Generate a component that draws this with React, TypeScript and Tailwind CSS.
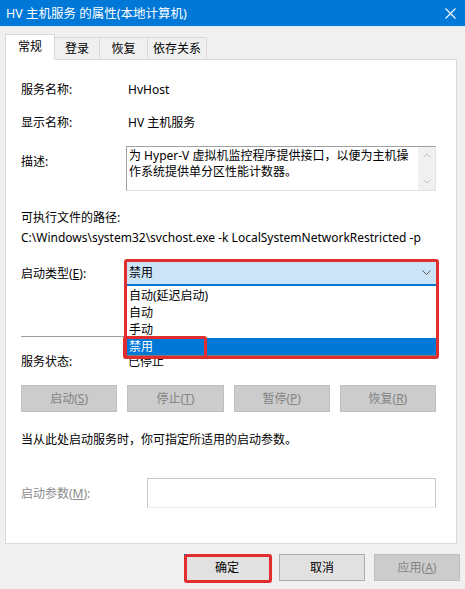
import React from 'react';

// Windows 10 service properties dialog (常规 tab with open start-type dropdown)

const font = { fontFamily: '"Noto Sans", "Noto Sans CJK SC", sans-serif' };

function DisabledButton({ text, k }: { text: string; k: string }) {
  return (
    <div className="flex h-[27px] items-center justify-center border border-[#bfbfbf] bg-[#cccccc] text-[#838383]">
      {text}(<u>{k}</u>)
    </div>
  );
}

export default function App() {
  return (
    <div className="relative h-[589px] w-[465px] overflow-hidden bg-[#f0f0f0] text-[12px] leading-[17px] text-black" style={font}>
      {/* title bar */}
      <div className="flex h-[27px] items-center justify-between border-b border-[#d8ecfb] bg-[#0078d7] pl-[6px] pr-[8px] text-white">
        <span className="text-[12.5px]">HV 主机服务 的属性(本地计算机)</span>
        <svg width="11" height="11" viewBox="0 0 11 11" className="mr-[1px]">
          <path d="M0.5 0.5 L10.5 10.5 M10.5 0.5 L0.5 10.5" stroke="white" strokeWidth="1.1" />
        </svg>
      </div>

      {/* tabs */}
      <div className="flex items-end pl-[5px] pt-[7px]">
        <div className="relative z-10 -mb-px flex h-[26px] w-[50px] items-start justify-center border border-b-0 border-[#d9d9d9] bg-white pt-[3px]">常规</div>
        <div className="flex h-[22px] w-[45px] items-center justify-center border border-l-0 border-b-0 border-[#d9d9d9] bg-[#f0f0f0]">登录</div>
        <div className="flex h-[22px] w-[48px] items-center justify-center border border-l-0 border-b-0 border-[#d9d9d9] bg-[#f0f0f0]">恢复</div>
        <div className="flex h-[22px] w-[59px] items-center justify-center border border-l-0 border-b-0 border-[#d9d9d9] bg-[#f0f0f0]">依存关系</div>
      </div>

      {/* panel */}
      <div className="ml-[5px] mr-[8px] h-[485px] border border-[#d9d9d9] bg-white pl-[15px] pr-[20px]">
        <div className="mt-[21px] flex h-[17px] items-center">
          <span className="w-[107px]">服务名称:</span>
          <span>HvHost</span>
        </div>
        <div className="mt-[16px] flex h-[17px] items-center">
          <span className="w-[107px]">显示名称:</span>
          <span>HV 主机服务</span>
        </div>
        <div className="mt-[15px] flex h-[45px]">
          <span className="w-[105px] pt-[7px]">描述:</span>
          <div className="flex flex-1 border border-[#a0a0a0] border-r-[#e3e3e3] border-b-[#e3e3e3]">
            <div className="flex-1 pl-[2px] pt-[1px] leading-[16px]">为 Hyper-V 虚拟机监控程序提供接口，以便为主机操作系统提供单分区性能计数器。</div>
            <div className="flex w-[17px] flex-col items-center justify-between bg-[#f0f0f0] py-[6px]">
              <svg width="8" height="5" viewBox="0 0 8 5"><path d="M0.5 4.5 L4 1 L7.5 4.5" fill="none" stroke="#c2c2c2" /></svg>
              <svg width="8" height="5" viewBox="0 0 8 5"><path d="M0.5 0.5 L4 4 L7.5 0.5" fill="none" stroke="#c2c2c2" /></svg>
            </div>
          </div>
        </div>
        <div className="mt-[18px] flex h-[17px] items-center">可执行文件的路径:</div>
        <div className="mt-[3px] flex h-[17px] items-center whitespace-nowrap">C:\Windows\system32\svchost.exe -k LocalSystemNetworkRestricted -p</div>

        <div className="mt-[15px] flex h-[25px] items-center">
          <span className="w-[105px]">启动类型(<u>E</u>):</span>
          <div className="relative flex h-[25px] flex-1 items-center justify-between border-b-2 border-[#0078d7] bg-[#cce4f7] pl-[3px] pr-[5px]">
            <span>禁用</span>
            <svg width="9" height="5" viewBox="0 0 9 5"><path d="M0.5 0.5 L4.5 4.5 L8.5 0.5" fill="none" stroke="#5a5a5a" /></svg>
          </div>
        </div>
        <div className="mt-[50px] h-px bg-[#a0a0a0]" />
        <div className="mt-[16px] flex h-[17px] items-center">
          <span className="w-[107px]">服务状态:</span>
          <span>已停止</span>
        </div>
        <div className="mt-[15px] grid grid-cols-4 gap-[10px]">
          <DisabledButton text="启动" k="S" />
          <DisabledButton text="停止" k="T" />
          <DisabledButton text="暂停" k="P" />
          <DisabledButton text="恢复" k="R" />
        </div>
        <div className="mt-[19px] flex h-[17px] items-center">当从此处启动服务时，你可指定所适用的启动参数。</div>
        <div className="mt-[30px] flex h-[30px] items-center">
          <span className="w-[126px] text-[#8a8a8a]">启动参数(<u>M</u>):</span>
          <div className="h-[30px] flex-1 border border-[#c8c8c8] border-b-[#eaeaea]" />
        </div>
      </div>

      {/* bottom buttons */}
      <div className="mt-[10px] flex justify-end gap-[9px] pr-[5px]">
        <div className="flex h-[27px] w-[86px] items-center justify-center border border-[#0078d7] bg-[#e1e1e1]">确定</div>
        <div className="flex h-[27px] w-[86px] items-center justify-center border border-[#adadad] bg-[#e1e1e1]">取消</div>
        <div className="flex h-[27px] w-[86px] items-center justify-center border border-[#bfbfbf] bg-[#cccccc] text-[#838383]">应用(<u>A</u>)</div>
      </div>

      {/* open dropdown list */}
      <div className="absolute left-[125px] top-[287px] w-[312px] border border-t-0 border-[#7a7a7a] bg-white">
        <div className="h-[17px] pl-[3px]">自动(延迟启动)</div>
        <div className="h-[17px] pl-[3px]">自动</div>
        <div className="h-[17px] pl-[3px]">手动</div>
        <div className="h-[17px] bg-[#0078d7] pl-[3px] text-white">禁用</div>
      </div>

      {/* red highlight marks */}
      <div className="absolute left-[124px] top-[259px] h-[100px] w-[315px] rounded-[3px] border-[3px] border-[#e02d2d]" />
      <div className="absolute left-[123px] top-[336px] h-[23px] w-[84px] rounded-[3px] border-[3px] border-[#e02d2d]" />
      <div className="absolute left-[184px] top-[554px] h-[29px] w-[88px] rounded-[3px] border-[3px] border-[#e02d2d]" />
    </div>
  );
}
